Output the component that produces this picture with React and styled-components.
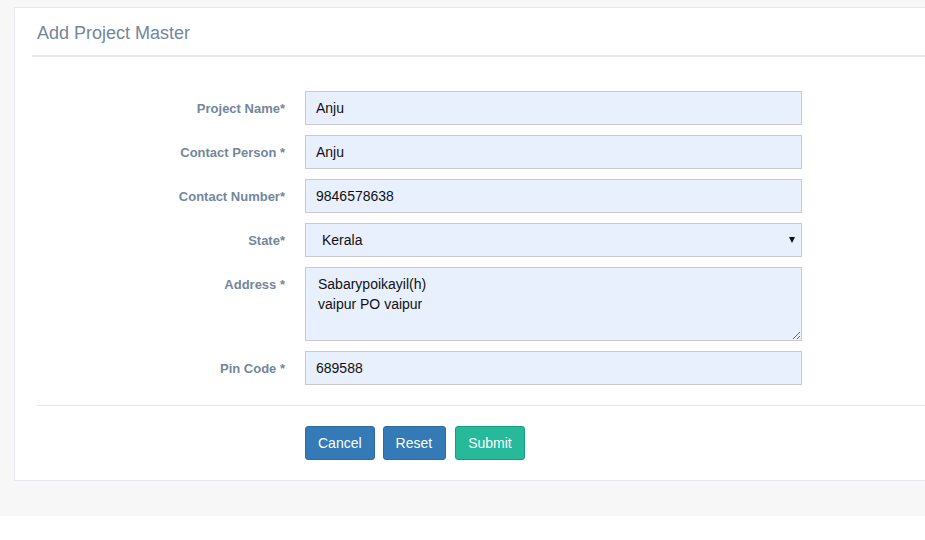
import React from "react";
import styled, { createGlobalStyle } from "styled-components";

const Global = createGlobalStyle`
  html, body { margin: 0; padding: 0; background: #fff; overflow: hidden; }
  body { font-family: "Liberation Sans", Arial, Helvetica, sans-serif; }
  * { box-sizing: border-box; }
`;

const Page = styled.div`
  background: #f7f7f7;
  padding: 7px 0 35px 14px;
  width: 100%;
  overflow: hidden;
`;

const Panel = styled.div`
  width: 960px;
  background: #fff;
  border: 1px solid #e6e9ed;
  padding: 0 17px 20px;
`;

const TitleBar = styled.div`
  padding: 15px 5px 12px;
  border-bottom: 2px solid #e6e9ed;
`;

const Title = styled.h2`
  margin: 0;
  font-size: 18px;
  line-height: 20px;
  font-weight: 400;
  color: #73879c;
`;

const Form = styled.form`
  padding-top: 34px;
`;

const Row = styled.div`
  display: grid;
  grid-template-columns: 253px 497px;
  column-gap: 20px;
  margin-bottom: 10px;
  &:last-of-type { margin-bottom: 0; }
`;

const Label = styled.label`
  text-align: right;
  font-size: 13px;
  font-weight: 700;
  color: #73879c;
  padding-top: 10px;
  line-height: 16px;
`;

const fieldBase = `
  width: 100%;
  border: 1px solid #cacaca;
  border-radius: 0;
  background: #e8f0fe;
  color: #111;
  font-family: "Liberation Sans", Arial, Helvetica, sans-serif;
  font-size: 14px;
  line-height: 20px;
  outline: none;
  margin: 0;
`;

const Input = styled.input`
  ${fieldBase}
  height: 34px;
  padding: 6px 10px;
`;

const SelectWrap = styled.div`
  position: relative;
`;

const Select = styled.select`
  ${fieldBase}
  height: 34px;
  padding: 6px 30px 6px 16px;
  appearance: none;
  -webkit-appearance: none;
`;

const Arrow = styled.span`
  position: absolute;
  right: 7px;
  top: 14px;
  width: 0;
  height: 0;
  border-left: 3.5px solid transparent;
  border-right: 3.5px solid transparent;
  border-top: 6px solid #111;
  pointer-events: none;
`;

const TextArea = styled.textarea`
  ${fieldBase}
  height: 74px;
  padding: 6px 12px;
  resize: vertical;
  display: block;
`;

const Divider = styled.div`
  border-top: 1px solid #e5e5e5;
  margin: 20px -20px 20px 5px;
`;

const Actions = styled.div`
  display: flex;
  gap: 8px;
  padding-left: 273px;
`;

const Button = styled.button`
  font-family: "Liberation Sans", Arial, Helvetica, sans-serif;
  font-size: 14px;
  line-height: 20px;
  padding: 6px ${(p) => (p.$wide ? "13px" : "12px")} 6px 12px;
  margin-left: ${(p) => (p.$variant === "success" ? "1px" : "0")};
  border-radius: 3px;
  color: #fff;
  cursor: pointer;
  background: ${(p) => (p.$variant === "success" ? "#26b99a" : "#337ab7")};
  border: 1px solid ${(p) => (p.$variant === "success" ? "#169f85" : "#2e6da4")};
`;

export default function App() {
  return (
    <>
      <Global />
      <Page>
        <Panel>
          <TitleBar>
            <Title>Add Project Master</Title>
          </TitleBar>
          <Form onSubmit={(e) => e.preventDefault()}>
            <Row>
              <Label>Project Name*</Label>
              <Input defaultValue="Anju" />
            </Row>
            <Row>
              <Label>Contact Person *</Label>
              <Input defaultValue="Anju" />
            </Row>
            <Row>
              <Label>Contact Number*</Label>
              <Input defaultValue="9846578638" />
            </Row>
            <Row>
              <Label>State*</Label>
              <SelectWrap>
                <Select defaultValue="Kerala">
                  <option value="Kerala">Kerala</option>
                </Select>
                <Arrow />
              </SelectWrap>
            </Row>
            <Row>
              <Label>Address *</Label>
              <TextArea defaultValue={"Sabarypoikayil(h)\nvaipur PO vaipur"} />
            </Row>
            <Row>
              <Label>Pin Code *</Label>
              <Input defaultValue="689588" />
            </Row>
            <Divider />
            <Actions>
              <Button type="button">Cancel</Button>
              <Button type="button" $wide>Reset</Button>
              <Button type="submit" $variant="success">Submit</Button>
            </Actions>
          </Form>
        </Panel>
      </Page>
    </>
  );
}
